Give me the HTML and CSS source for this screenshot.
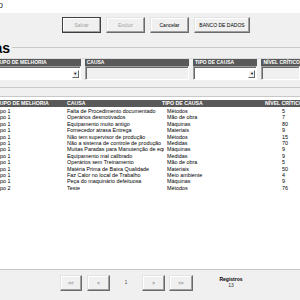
FILE: index.html
```html
<!DOCTYPE html>
<html lang="pt">
<head>
<meta charset="utf-8">
<title>Cadastro</title>
<link rel="stylesheet" href="styles.css">
</head>
<body>
<div class="window">
  <div class="titlebar"><span class="title">Cadastro</span></div>
  <div class="toolbar">
    <button class="btn btn-default" disabled>Salvar</button>
    <button class="btn" disabled>Excluir</button>
    <button class="btn">Cancelar</button>
    <button class="btn btn-wide">BANCO DE DADOS</button>
  </div>
  <div class="section">
    <h1 class="section-title">Causas</h1>
    <div class="rule"></div>
  </div>
  <div class="filters">
    <div class="field field-grupo">
      <div class="field-label">GRUPO DE MELHORIA</div>
      <div class="input combo"><span class="drop">&#9660;</span></div>
    </div>
    <div class="field field-causa">
      <div class="field-label">CAUSA</div>
      <div class="input"></div>
    </div>
    <div class="field field-tipo">
      <div class="field-label">TIPO DE CAUSA</div>
      <div class="input combo"><span class="drop">&#9660;</span></div>
    </div>
    <div class="field field-nivel">
      <div class="field-label">NÍVEL CRÍTICO</div>
      <div class="input"></div>
    </div>
  </div>
  <div class="sep"></div>
  <div class="list">
    <div class="list-head">
      <span>GRUPO DE MELHORIA</span>
      <span>CAUSA</span>
      <span>TIPO DE CAUSA</span>
      <span>NÍVEL CRÍTICO</span>
    </div>
    <div class="rows">
      <span>Grupo 1</span><span>Falta de Procedimento documentado</span><span>Métodos</span><span>5</span>
      <span>Grupo 1</span><span>Operários desmotivados</span><span>Mão de obra</span><span>7</span>
      <span>Grupo 1</span><span>Equipamento muito antigo</span><span>Máquinas</span><span>80</span>
      <span>Grupo 1</span><span>Fornecedor atrasa Entrega</span><span>Materiais</span><span>9</span>
      <span>Grupo 1</span><span>Não tem supervisor de produção</span><span>Métodos</span><span>15</span>
      <span>Grupo 1</span><span>Não a sistema de controle de produção</span><span>Medidas</span><span>70</span>
      <span>Grupo 1</span><span>Muitas Paradas para Manutenção de equipamentos</span><span>Máquinas</span><span>9</span>
      <span>Grupo 1</span><span>Equipamento mal calibrado</span><span>Medidas</span><span>9</span>
      <span>Grupo 1</span><span>Operários sem Treinamento</span><span>Mão de obra</span><span>5</span>
      <span>Grupo 1</span><span>Matéria Prima de Baixa Qualidade</span><span>Materiais</span><span>50</span>
      <span>Grupo 1</span><span>Faz Calor no local de Trabalho</span><span>Meio ambiente</span><span>4</span>
      <span>Grupo 1</span><span>Peça do maquinário defeituosa</span><span>Máquinas</span><span>9</span>
      <span>Grupo 2</span><span>Teste</span><span>Métodos</span><span>76</span>
    </div>
  </div>
  <div class="footer">
    <button class="btn nav nav-first">&lt;&lt;</button>
    <button class="btn nav nav-prev">&lt;</button>
    <span class="page">1</span>
    <button class="btn nav nav-next">&gt;</button>
    <button class="btn nav nav-last">&gt;&gt;</button>
    <div class="count">
      <div class="count-label">Registros</div>
      <div class="count-value">13</div>
    </div>
  </div>
</div>
</body>
</html>
```
FILE: styles.css
```css
* { box-sizing: border-box; }
html, body {
  margin: 0;
  padding: 0;
  width: 300px;
  height: 300px;
  overflow: hidden;
  background: #f0f0f0;
}
.window {
  width: 300px;
  height: 300px;
  font-family: "Liberation Sans", Arial, sans-serif;
  color: #000;
  display: flex;
  flex-direction: column;
}
.titlebar {
  height: 13px;
  background: #fff;
  overflow: hidden;
  flex: none;
}
.title {
  display: block;
  width: 40px;
  margin-left: -37px;
  text-align: right;
  font-size: 9px;
  line-height: 11px;
  color: #333;
}
.toolbar {
  flex: none;
  height: 25px;
  padding: 4px 0 0 62px;
  display: flex;
  gap: 5px;
  align-items: flex-start;
}
.btn {
  font-family: "Liberation Sans", Arial, sans-serif;
  font-size: 5px;
  color: #000;
  background: #f0f0f0;
  height: 16px;
  width: 39px;
  padding: 0;
  border: 1px solid;
  border-color: #e3e3e3 #6b6b6b #6b6b6b #e3e3e3;
  box-shadow: inset -1px -1px #a0a0a0, inset 1px 1px #fff;
  border-radius: 0;
}
.btn:disabled { color: #a0a0a0; }
.btn-default { border-color: #404040; }
.btn-wide { width: 56px; }
.section {
  flex: none;
  height: 20px;
  display: flex;
  align-items: center;
}
.section-title {
  flex: none;
  width: 50px;
  margin: 0 0 0 -40px;
  text-align: right;
  font-size: 14px;
  font-weight: bold;
  line-height: 14px;
}
.rule {
  flex: 1;
  margin-left: 2px;
  margin-bottom: 1px;
  border-top: 1px solid #c8c8c8;
}
.filters {
  flex: none;
  display: flex;
  gap: 4px;
  margin-left: -10px;
  border-top: 1px solid #dcdcdc;
  padding-top: 0;
}
.field { display: flex; flex-direction: column; }
.field-grupo { width: 100px; }
.field-causa { width: 115px; }
.field-tipo { width: 71px; }
.field-nivel { width: 40px; }
.field-label {
  height: 7px;
  background: #595959;
  color: #fff;
  font-size: 5px;
  font-weight: bold;
  line-height: 7px;
  padding-left: 2px;
  white-space: nowrap;
  overflow: hidden;
}
.input {
  height: 14px;
  background: #f0f0f0;
  border: 1px solid;
  border-color: #a0a0a0 #fff #fff #a0a0a0;
  box-shadow: inset 1px 1px #696969;
  position: relative;
}
.combo { background: #fff; }
.drop {
  position: absolute;
  right: 1px;
  top: 3px;
  width: 7px;
  height: 8px;
  background: #f0f0f0;
  border: 1px solid;
  border-color: #fff #696969 #696969 #fff;
  font-size: 4px;
  line-height: 6px;
  text-align: center;
}
.sep {
  flex: none;
  height: 17px;
  border-bottom: 1px solid #c8c8c8;
}
.sep::before {
  content: "";
  display: block;
  margin-top: 7px;
  border-top: 1px solid #c8c8c8;
}
.list {
  flex: none;
  height: 172px;
  background: #fff;
  padding-top: 3px;
  overflow: hidden;
}
.list-head {
  height: 6.5px;
  background: #595959;
  color: #fff;
  font-size: 5.2px;
  font-weight: bold;
  line-height: 6.5px;
  display: grid;
  grid-template-columns: 75px 95px 103px 60px;
  white-space: nowrap;
}
.list-head span { margin-left: -8px; }
.rows {
  display: grid;
  grid-template-columns: 76px 100px 115px 60px;
  grid-auto-rows: 6.42px;
  margin-left: -9px;
  margin-top: 1.5px;
  font-size: 5.4px;
  line-height: 6.42px;
  white-space: nowrap;
}
.rows span { overflow: hidden; margin-right: 3px; }
.footer {
  flex: 1;
  border-top: 1px solid #c8c8c8;
  display: flex;
  align-items: flex-start;
  padding: 5px 0 0 60px;
}
.nav { width: 23px; height: 16px; font-size: 4.5px; color: #404040; }
.nav-first { width: 22px; margin-right: 5px; }
.nav-last { width: 24px; margin-left: 4px; }
.page {
  width: 32px;
  text-align: center;
  font-size: 4.5px;
  line-height: 16px;
  color: #404040;
}
.count {
  margin-left: 22px;
  width: 32px;
  text-align: center;
  padding-top: 1px;
}
.count-label { font-size: 5px; font-weight: bold; line-height: 6px; }
.count-value { font-size: 5px; line-height: 7px; color: #333; }
```
